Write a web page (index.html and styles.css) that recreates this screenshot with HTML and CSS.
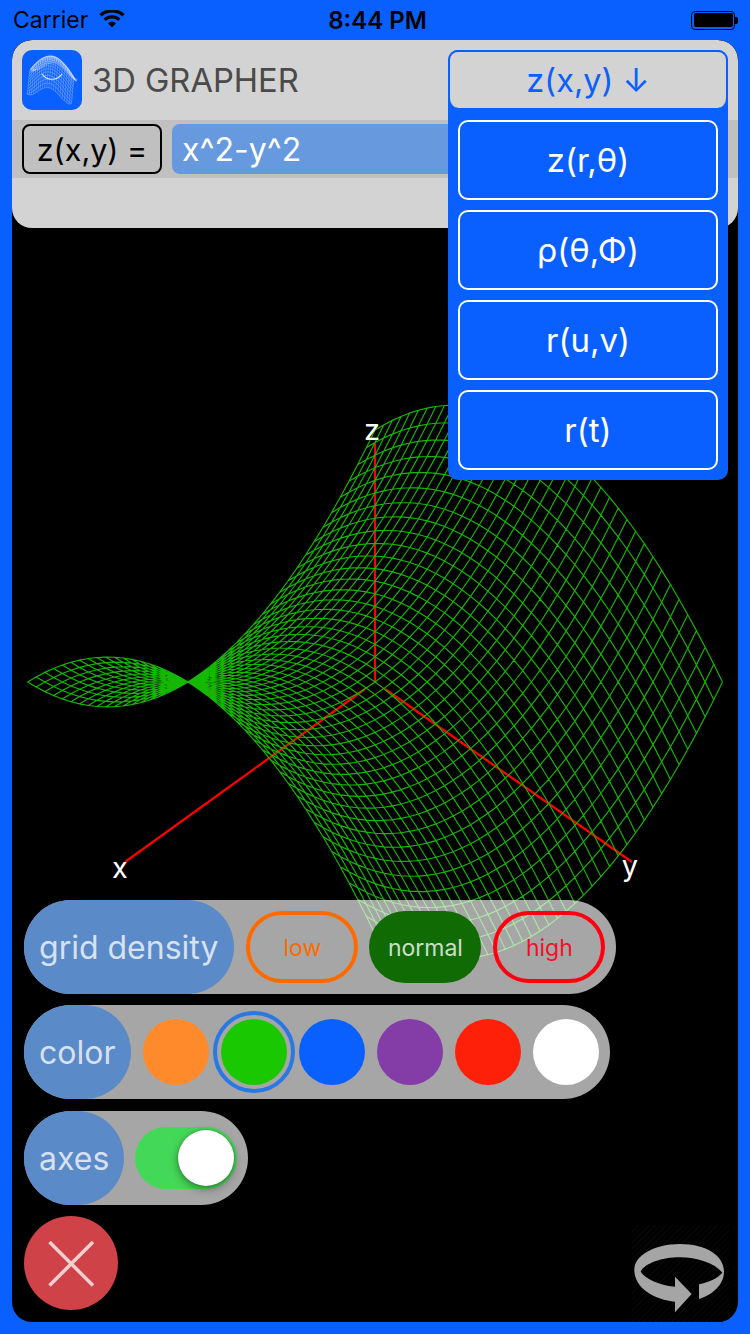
FILE: index.html
```html
<!DOCTYPE html>
<html lang="en">
<head>
<meta charset="utf-8">
<title>3D Grapher</title>
<link rel="stylesheet" href="styles.css">
</head>
<body>
<div class="screen">
  <header class="status">
    <div class="status-left">
      <span>Carrier</span>
      <svg class="wifi" viewBox="0 0 26 18"><path d="M13 17.6 9 13.2a5.800 5.800 0 0 1 8 0Z"/><path d="M6.800 11 4.600 8.600a12.400 12.400 0 0 1 16.800 0L19.200 11a9.200 9.200 0 0 0-12.400 0Z"/><path d="M2.600 6.400.4 4a18.800 18.800 0 0 1 25.200 0l-2.200 2.400a15.600 15.600 0 0 0-20.800 0Z"/></svg>
    </div>
    <div class="status-time">8:44 PM</div>
    <div class="status-right">
      <span class="battery"><span class="battery-fill"></span></span><span class="battery-nub"></span>
    </div>
  </header>

  <main class="stage">
    <svg class="graph" viewBox="12 40 726 1282" aria-label="Graph of z = x^2 - y^2">
      <g class="axes">
        <path class="axis-dim" d="M375 682 365 689M375 682 385 689"/>
        <path class="axis" d="M375 682V443M365 689 125 862M385 689 632 862"/>
      </g>
      <path id="surface" class="surface"/>
      <text class="axis-label" x="120" y="878">x</text>
      <text class="axis-label" x="630" y="876">y</text>
      <text class="axis-label" x="372" y="440">z</text>
    </svg>

    <section class="top-panel">
      <div class="title-row">
        <svg class="logo" viewBox="0 0 60 60"><rect width="60" height="60" rx="10" class="logo-bg"/><path id="logo-mesh" class="logo-mesh"/><path class="logo-arc" d="M20 24C25 31 35 31 40 24"/></svg>
        <h1 class="title">3D GRAPHER</h1>
      </div>
      <div class="input-row">
        <div class="eq-label">z(x,y) =</div>
        <div class="eq-input">x^2-y^2</div>
      </div>
      <div class="panel-foot"></div>
    </section>

    <nav class="dropdown">
      <button class="drop-head">z(x,y) ↓</button>
      <ul class="drop-list">
        <li class="drop-item">z(r,θ)</li>
        <li class="drop-item">ρ(θ,Φ)</li>
        <li class="drop-item">r(u,v)</li>
        <li class="drop-item">r(t)</li>
      </ul>
    </nav>

    <section class="controls">
      <div class="pill">
        <span class="pill-label">grid density</span>
        <div class="pill-body density">
          <span class="opt opt-low">low</span>
          <span class="opt opt-normal">normal</span>
          <span class="opt opt-high">high</span>
        </div>
      </div>
      <div class="pill">
        <span class="pill-label">color</span>
        <div class="pill-body swatches">
          <span class="swatch sw-orange"></span>
          <span class="swatch sw-green selected"></span>
          <span class="swatch sw-blue"></span>
          <span class="swatch sw-purple"></span>
          <span class="swatch sw-red"></span>
          <span class="swatch sw-white"></span>
        </div>
      </div>
      <div class="pill">
        <span class="pill-label label-axes">axes</span>
        <div class="pill-body">
          <span class="switch"><span class="knob"></span></span>
        </div>
      </div>
      <button class="close" aria-label="Close">
        <svg viewBox="0 0 94 94"><path d="M25.500 26 69 69.500M69 26 25.500 69.500"/></svg>
      </button>
    </section>

    <button class="rotate" aria-label="Rotate">
      <svg viewBox="0 0 315 285"><path d="M222 178C250 172 278 160 292 143C270 115 215 97 165 97C110 97 60 115 47 140C60 160 100 180 150 185L150 155 200 207 150 262 150 230C90 225 28 190 28 135C28 90 90 57 165 57C240 57 297 90 297 140C297 180 260 210 222 222Z"/></svg>
    </button>
  </main>
</div>
<script src="graph.js"></script>
</body>
</html>
```

FILE: styles.css
```css
* { box-sizing: border-box; margin: 0; padding: 0; }
html, body { width: 750px; height: 1334px; overflow: hidden; }
body { font-family: Inter, "Noto Sans", sans-serif; background: #0a60ff; }
button { font: inherit; border: 0; background: none; }
ul { list-style: none; }

.screen { width: 750px; height: 1334px; display: flex; flex-direction: column; padding: 0 12px 12px; }

.status { height: 40px; display: grid; grid-template-columns: 1fr auto 1fr; align-items: center; color: #000; font-size: 23px; }
.status-left { display: flex; align-items: center; gap: 11px; padding-left: 1px; }
.wifi { width: 26px; height: 18px; fill: #000; margin-top: -3px; }
.status-time { font-weight: 600; font-size: 24px; padding-left: 5px; }
.status-right { display: flex; justify-content: flex-end; align-items: center; }
.battery { width: 44px; height: 19px; border: 1.5px solid #000; border-radius: 4px; padding: 1.5px; display: block; }
.battery-fill { display: block; height: 100%; background: #000; border-radius: 2px; }
.battery-nub { width: 3px; height: 7px; background: #000; border-radius: 0 2px 2px 0; }

.stage { position: relative; flex: 1; background: #000; border-radius: 20px; overflow: hidden; }
.graph { position: absolute; left: 0; top: 0; width: 726px; height: 1282px; }
.surface { fill: none; stroke: #15b800; stroke-width: 1.15; }
.axis { fill: none; stroke: #ff0000; stroke-width: 2.2; }
.axis-dim { fill: none; stroke: #a01000; stroke-width: 1; }
.axis-label { fill: #fff; font-size: 29px; text-anchor: middle; font-family: Inter, sans-serif; }

.top-panel { position: relative; background: #d3d3d3; height: 188px; border-radius: 20px; display: flex; flex-direction: column; }
.title-row { height: 80px; display: flex; align-items: center; gap: 10px; padding-left: 10px; }
.logo { width: 60px; height: 60px; flex: none; }
.logo-bg { fill: #0a60ff; }
.logo-mesh { fill: none; stroke: #fff; stroke-opacity: .55; stroke-width: .45; }
.logo-arc { fill: none; stroke: #fff; stroke-width: 1.2; stroke-opacity: .85; }
.title { font-size: 32.7px; font-weight: 400; color: #4a4a4a; }
.input-row { height: 58px; background: #c0c0c0; display: flex; align-items: center; gap: 10px; padding: 0 10px; }
.eq-label { width: 140px; height: 50px; border: 2px solid #000; border-radius: 8px; display: flex; align-items: center; justify-content: center; font-size: 30.5px; color: #000; }
.eq-input { flex: 1; height: 50px; background: #6699dd; border-radius: 8px; color: #fff; font-size: 32px; display: flex; align-items: center; padding-left: 10px; }
.panel-foot { flex: 1; }

.dropdown { position: absolute; left: 436px; top: 10px; width: 280px; background: #0a60ff; border-radius: 10px; padding: 0 0 10px; }
.drop-head { display: block; width: 100%; height: 58px; background: #d3d3d3; border: 2px solid #0a60ff; border-bottom: 0; border-radius: 10px; color: #0a60ff; font-size: 32.5px; }
.drop-list { display: flex; flex-direction: column; gap: 10px; padding: 12px 10px 0; }
.drop-item { height: 80px; border: 2px solid #fff; border-radius: 10px; display: flex; align-items: center; justify-content: center; color: #fff; font-size: 33px; }

.controls { position: absolute; left: 12px; bottom: 12px; display: flex; flex-direction: column; align-items: flex-start; gap: 11.33px; }
.pill { display: flex; height: 94px; background: rgba(255,255,255,.65); border-radius: 47px; }
.pill-label { display: flex; align-items: center; padding: 1px 16px 0 15px; height: 100%; background: #5b8ac8; border-radius: 47px; color: rgba(255,255,255,.75); font-size: 32px; white-space: nowrap; }
.label-axes { padding-right: 15px; }
.pill-body { display: flex; align-items: center; padding: 0 11px; }
.density { gap: 11px; padding-left: 12px; }
.opt { width: 112px; height: 72px; border-radius: 36px; display: flex; align-items: center; justify-content: center; font-size: 23px; padding-top: 2px; }
.opt-low { border: 4px solid #ff6a00; color: #ff6a00; }
.opt-normal { background: #116b05; color: rgba(255,255,255,.8); }
.opt-high { border: 4px solid #ff0010; color: #f0102a; margin-left: 1px; }
.swatches { gap: 12px; padding-left: 12px; }
.swatch { position: relative; width: 66px; height: 66px; border-radius: 50%; }
.sw-orange { background: #ff8a2b; }
.sw-green { background: #19c800; }
.sw-blue { background: #0a60ff; }
.sw-purple { background: #843ca6; }
.sw-red { background: #ff2009; }
.sw-white { background: #fff; }
.selected::after { content: ""; position: absolute; inset: -8px; border: 4px solid #2a78e4; border-radius: 50%; }
.switch { position: relative; display: block; width: 102px; height: 62px; background: #44d858; border-radius: 31px; }
.knob { position: absolute; right: 3px; top: 3px; width: 56px; height: 56px; border-radius: 50%; background: #fff; box-shadow: 0 3px 8px rgba(0,0,0,.4), 0 0 2px rgba(0,0,0,.3); }
.close { width: 94px; height: 94px; border-radius: 50%; background: #cf4247; display: block; }
.close svg { display: block; width: 94px; height: 94px; }
.close path { stroke: rgba(255,255,255,.75); stroke-width: 3.5; fill: none; }

.rotate { position: absolute; right: 9px; bottom: 0; width: 97px; height: 97px; background: repeating-linear-gradient(135deg, #070707 0 1px, #000 1px 4px); }
.rotate svg { display: block; position: absolute; left: -7px; top: 0; width: 105px; height: 95px; }
.rotate path { fill: #a5a5a5; }
```

FILE: graph.js
```js
// Wireframe of z = x^2 - y^2 in orthographic projection.
function mesh(n, pt) {
  var d = '';
  for (var dir = 0; dir < 2; dir++) {
    for (var i = 0; i <= n; i++) {
      for (var j = 0; j <= n; j++) {
        var a = -1 + 2 * i / n, b = -1 + 2 * j / n;
        var p = dir ? pt(a, b) : pt(b, a);
        d += (j ? 'L' : 'M') + p[0].toFixed(2) + ' ' + p[1].toFixed(2);
      }
    }
  }
  return d;
}
document.getElementById('surface').setAttribute('d', mesh(40, function (x, y) {
  return [375 + (y - x) * 173.75, 682 + (x + y) * 126 - (x * x - y * y) * 117];
}));
document.getElementById('logo-mesh').setAttribute('d', mesh(20, function (x, y) {
  var z = (1 - x * x * y * y) * (1 - 0.6 * (x * x + y * y));
  return [30 + x * 22 - y * 3, 36.5 + x * 5 + y * 12.5 - z * 28];
}));
```
